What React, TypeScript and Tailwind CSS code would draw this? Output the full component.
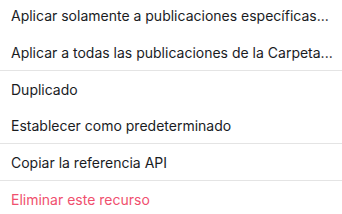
import React from "react";

const groups: { label: string; danger?: boolean }[][] = [
  [
    { label: "Aplicar solamente a publicaciones específicas..." },
    { label: "Aplicar a todas las publicaciones de la Carpeta..." },
  ],
  [{ label: "Duplicado" }, { label: "Establecer como predeterminado" }],
  [{ label: "Copiar la referencia API" }],
  [{ label: "Eliminar este recurso", danger: true }],
];

export default function App() {
  return (
    <div className="w-[342px] h-[214px] overflow-hidden bg-white font-['Inter',sans-serif]">
      <div className="-mt-[2px] flex flex-col">
        {groups.map((items, gi) => (
          <div key={gi} className={gi > 0 ? "border-t border-[#e4e4e4]" : ""}>
            {items.map((it, ii) => (
              <div
                key={it.label}
                className={
                  "h-9 flex items-center px-[11px] text-[14px] whitespace-nowrap " +
                  (gi === 0 && ii === 0 ? "pb-[2px] " : "") +
                  (it.danger ? "text-[#f0506e]" : "text-[#1a1c1f]")
                }
              >
                {it.label}
              </div>
            ))}
          </div>
        ))}
      </div>
    </div>
  );
}
